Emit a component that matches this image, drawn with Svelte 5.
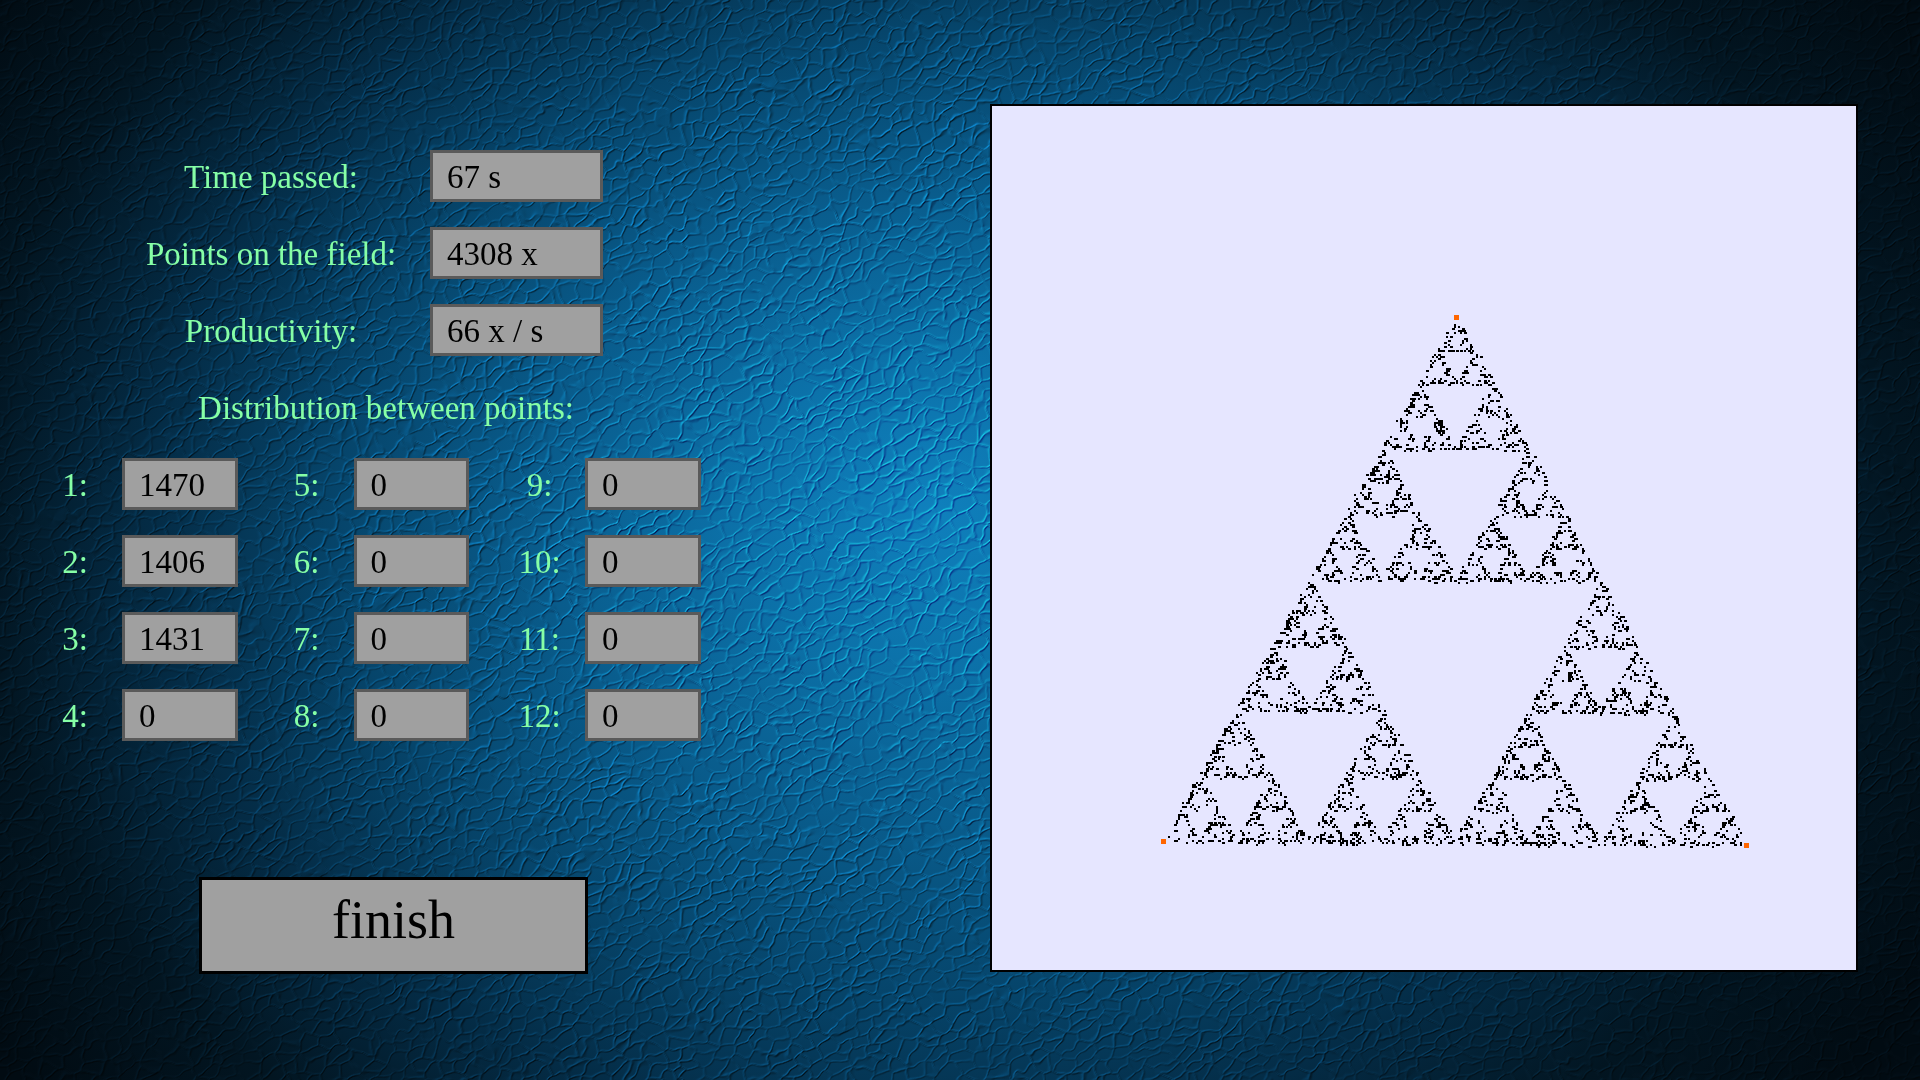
<script>
  import { onMount } from "svelte";

  const readouts = [
    { label: "Time passed:", value: "67 s" },
    { label: "Points on the field:", value: "4308 x" },
    { label: "Productivity:", value: "66 x / s" }
  ];
  // 12 slots, filled column by column
  const counts = [1470, 1406, 1431, 0, 0, 0, 0, 0, 0, 0, 0, 0];
  const byRow = [0, 1, 2, 3].flatMap((r) => [r, r + 4, r + 8]);

  const corners = [
    [464, 211],
    [171, 735],
    [754, 739]
  ];

  let field;
  let leather;

  function drawField() {
    const ctx = field.getContext("2d");
    let seed = 4308;
    const rnd = () => {
      seed = (seed * 1664525 + 1013904223) >>> 0;
      return (seed >>> 8) / 16777216;
    };
    let x = corners[0][0];
    let y = corners[0][1];
    ctx.fillStyle = "#000";
    for (let i = 0; i < 4308; i++) {
      const c = corners[Math.floor(rnd() * 3)];
      x = (x + c[0]) / 2;
      y = (y + c[1]) / 2;
      const px = Math.round((x + (rnd() - 0.5) * 4) / 2) * 2;
      const py = Math.round((y + (rnd() - 0.5) * 4) / 2) * 2;
      ctx.fillRect(px, py, rnd() < 0.3 ? 3 : 2, 2);
    }
    ctx.fillStyle = "#ff6600";
    for (const c of corners) ctx.fillRect(c[0] - 2, c[1] - 2, 5, 5);
  }

  // cracked leather: warped voronoi edges, lit from the top left
  function drawLeather() {
    const W = 1920;
    const H = 1080;
    const N = 256;
    const jx = new Float32Array(N * N);
    const jy = new Float32Array(N * N);
    const val = new Float32Array(N * N);
    let s = 77;
    const rnd = () => {
      s = (s * 1664525 + 1013904223) >>> 0;
      return s / 4294967296;
    };
    for (let i = 0; i < N * N; i++) {
      jx[i] = rnd();
      jy[i] = rnd();
      val[i] = rnd();
    }
    const noise = (x, y) => {
      const i = Math.floor(x);
      const j = Math.floor(y);
      let fx = x - i;
      let fy = y - j;
      fx = fx * fx * (3 - 2 * fx);
      fy = fy * fy * (3 - 2 * fy);
      const a = val[(i & 255) + (j & 255) * N];
      const b = val[((i + 1) & 255) + (j & 255) * N];
      const c = val[(i & 255) + ((j + 1) & 255) * N];
      const d = val[((i + 1) & 255) + ((j + 1) & 255) * N];
      return a + (b - a) * fx + (c - a) * fy + (a - b - c + d) * fx * fy;
    };

    const cell = 15;
    const cos = Math.cos(-0.5);
    const sin = Math.sin(-0.5);
    const h = new Float32Array(W * H);
    for (let y = 0; y < H; y++) {
      for (let x = 0; x < W; x++) {
        const wx = x + 9 * (noise(x / 38, y / 38) - 0.5) + 5 * (noise(x / 8 + 40, y / 8) - 0.5);
        const wy = y + 9 * (noise(x / 38 + 90, y / 38 + 17) - 0.5) + 5 * (noise(x / 8, y / 8 + 70) - 0.5);
        const u = (wx * cos + wy * sin) / (cell * 1.2);
        const v = (-wx * sin + wy * cos) / (cell * 0.8);
        const iu = Math.floor(u);
        const iv = Math.floor(v);
        let f1 = 9;
        let f2 = 9;
        for (let b = -1; b <= 1; b++) {
          for (let a = -1; a <= 1; a++) {
            const k = ((iu + a) & 255) + ((iv + b) & 255) * N;
            const du = iu + a + jx[k] - u;
            const dv = iv + b + jy[k] - v;
            const d = du * du + dv * dv;
            if (d < f1) {
              f2 = f1;
              f1 = d;
            } else if (d < f2) {
              f2 = d;
            }
          }
        }
        const edge = Math.min(1, (Math.sqrt(f2) - Math.sqrt(f1)) * cell * 0.25);
        const depth = 0.35 + 0.65 * noise(x / 22 + 11, y / 22 + 5);
        h[x + y * W] = 1 - depth * (1 - edge) * (1 - edge);
      }
    }

    const ctx = leather.getContext("2d");
    const img = ctx.createImageData(W, H);
    for (let y = 0; y < H; y++) {
      for (let x = 0; x < W; x++) {
        const l = h[Math.max(x - 1, 0) + y * W];
        const r = h[Math.min(x + 1, W - 1) + y * W];
        const t = h[x + Math.max(y - 1, 0) * W];
        const bm = h[x + Math.min(y + 1, H - 1) * W];
        const shade = ((l - r) + (t - bm)) * 60;
        const g = 128 + shade;
        const p = (x + y * W) * 4;
        img.data[p] = g;
        img.data[p + 1] = g;
        img.data[p + 2] = g;
        img.data[p + 3] = 255;
      }
    }
    ctx.putImageData(img, 0, 0);
  }

  onMount(() => {
    drawLeather();
    drawField();
  });
</script>

<div class="page">
  <canvas class="leather" bind:this={leather} width="1920" height="1080"></canvas>

  <section class="panel">
    <div class="readouts">
      {#each readouts as r}
        <span class="label">{r.label}</span>
        <div class="box">{r.value}</div>
      {/each}
    </div>

    <h2 class="label dist">Distribution between points:</h2>

    <div class="counts">
      {#each byRow as i}
        <div class="slot">
          <span class="label">{i + 1}:</span>
          <div class="box">{counts[i]}</div>
        </div>
      {/each}
    </div>

    <button class="finish">finish</button>
  </section>

  <section class="board">
    <canvas bind:this={field} width="864" height="864"></canvas>
  </section>
</div>

<style>
  :global(body) {
    margin: 0;
    background: #02101a;
  }
  .page {
    position: relative;
    width: 1920px;
    height: 1080px;
    overflow: hidden;
    display: flex;
    justify-content: space-between;
    font-family: "Liberation Serif", "Times New Roman", serif;
    background: radial-gradient(ellipse 1020px 830px at 930px 510px, #0f80bd 0%, #0c72aa 18%, #095c8c 38%, #06456b 58%, #042c46 76%, #021521 94%, #010b12 112%);
  }
  .leather {
    position: absolute;
    inset: 0;
    mix-blend-mode: overlay;
  }
  .panel {
    position: relative;
    width: 740px;
    padding-top: 150px;
    box-sizing: border-box;
  }
  .label {
    box-sizing: border-box;
    height: 52px;
    padding-top: 1px;
    color: #86ffa6;
    font-size: 33px;
    text-align: center;
    line-height: 52px;
    font-weight: normal;
    margin: 0;
    white-space: nowrap;
  }
  .box {
    box-sizing: border-box;
    height: 52px;
    line-height: 48px;
    padding-left: 14px;
    background: #a0a0a0;
    border: 3px solid #5a5a5a;
    color: #000;
    font-size: 33px;
  }
  .readouts {
    display: grid;
    grid-template-columns: 282px 173px;
    column-gap: 18px;
    row-gap: 25px;
    margin-left: 130px;
  }
  .dist {
    margin: 25px 0;
    width: 772px;
  }
  .counts {
    display: grid;
    grid-template-columns: repeat(3, 209.5px);
    column-gap: 22px;
    row-gap: 25px;
    margin-left: 28px;
  }
  .slot {
    display: grid;
    grid-template-columns: 94px 1fr;
  }
  .slot:nth-child(3n) .label {
    padding-left: 3px;
  }
  .finish {
    display: block;
    box-sizing: border-box;
    width: 389px;
    height: 97px;
    margin: 136px 0 0 199px;
    background: #a0a0a0;
    border: 3px solid #000;
    color: #000;
    font-family: inherit;
    font-size: 54px;
    padding: 0 0 12px;
  }
  .board {
    position: relative;
    margin: 104px 62px 0 0;
    width: 868px;
    height: 868px;
    box-sizing: border-box;
    border: 2px solid #000;
    background: #e6e6ff;
  }
  .board canvas {
    display: block;
  }
</style>
